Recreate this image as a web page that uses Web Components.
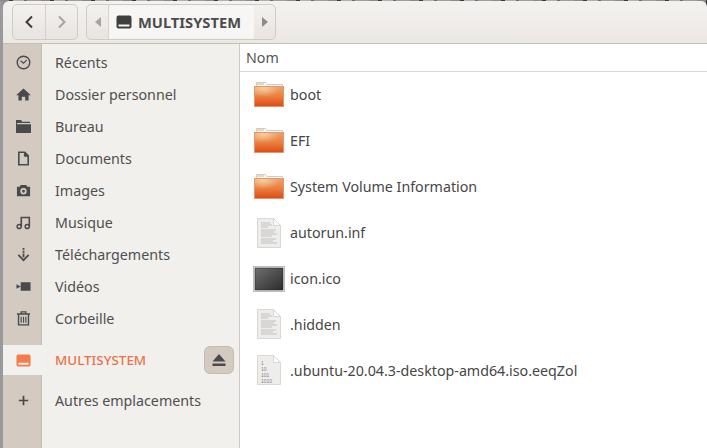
<!DOCTYPE html>
<html>
<head>
<meta charset="utf-8">
<style>
    html, body { margin: 0; height: 100%; overflow: hidden; }
    body {
        font-family: "Noto Sans", sans-serif; font-size: 14.25px; color: #4c4c4c;
        background:
            linear-gradient(90deg, #9a9a9c 3px, transparent 3px) 0 1px / 100% 100% no-repeat,
            repeating-linear-gradient(90deg, #8d8a86 0 9px, #3d3b3a 9px 13px, #b4afa8 13px 24px, #5f6f80 24px 27px, #a39d94 27px 41px);
    }
</style>
</head>
<body>

<template id="icons">
    <svg id="recent" viewBox="0 0 16 16"><circle cx="8" cy="8" r="6.7" fill="none" stroke="#4a4a4a" stroke-width="1.5"/><path d="M4.8 6.2L8 8.8l3.4-3.4" fill="none" stroke="#4a4a4a" stroke-width="1.3"/></svg>
    <svg id="home" viewBox="0 0 16 16"><path fill-rule="evenodd" d="M8 1.5L.2 8.8h2.4V14.5h3.6V10.5h3.6V14.5h3.6V8.8h2.4z" fill="#4a4a4a"/></svg>
    <svg id="desk" viewBox="0 0 16 16"><path d="M0 1h5.5l1 1.8H15v1.4H1.2V5.5H16V15H0z" fill="#4a4a4a"/></svg>
    <svg id="doc" viewBox="0 0 16 16"><path d="M3 1.4h6.4L13 5.2v9.4H3z" fill="none" stroke="#4a4a4a" stroke-width="1.7"/><path d="M9 1.4V5.6h4z" fill="#4a4a4a" stroke="#4a4a4a"/></svg>
    <svg id="cam" viewBox="0 0 16 16"><path fill-rule="evenodd" d="M1 4h3l1-2h6l1 2h3v10H1zM8 5.4a3.4 3.4 0 100 6.8 3.4 3.4 0 000-6.8zM8 7.3a1.5 1.5 0 110 3 1.5 1.5 0 010-3z" fill="#4a4a4a"/></svg>
    <svg id="music" viewBox="0 0 16 16"><path d="M5.6 12V2.6h8.6v9.4" fill="none" stroke="#4a4a4a" stroke-width="1.7"/><circle cx="3.4" cy="12.3" r="2.2" fill="none" stroke="#4a4a4a" stroke-width="1.6"/><circle cx="12" cy="12.3" r="2.2" fill="none" stroke="#4a4a4a" stroke-width="1.6"/></svg>
    <svg id="down" viewBox="0 0 16 16"><path d="M7 1h2v2H7zM7 4h2v2H7zM7 7h2v4H7z" fill="#4a4a4a"/><path d="M2.5 8.5L8 14l5.5-5.5" fill="none" stroke="#4a4a4a" stroke-width="1.9"/></svg>
    <svg id="video" viewBox="0 0 16 16"><path d="M5 3.5h10.5v9H5zM0.5 5.5L5 8l-4.5 2.5z" fill="#4a4a4a"/></svg>
    <svg id="trash" viewBox="0 0 16 16"><path d="M1 3.2h14M5.5 3V1h5v2" fill="none" stroke="#4a4a4a" stroke-width="1.4"/><path d="M2.7 3.5v11.3h10.6V3.5" fill="none" stroke="#4a4a4a" stroke-width="1.5"/><path d="M5.5 6v6.5M8 6v6.5M10.5 6v6.5" stroke="#4a4a4a" stroke-width="1.2"/></svg>
    <svg id="drive" viewBox="0 0 16 16"><path fill-rule="evenodd" d="M2.5 1.5h11a2 2 0 012 2v9a2 2 0 01-2 2h-11a2 2 0 01-2-2v-9a2 2 0 012-2zM2.5 10.5v2h11v-2z" fill="currentColor"/></svg>
    <svg id="plus" viewBox="0 0 16 16"><path d="M3 8h10M8 3v10" stroke="#4a4a4a" stroke-width="1.8"/></svg>
</template>

<template id="side_row_tpl">
    <style>
        :host { display: grid; grid-template-columns: 39px 1fr; height: 32px; align-items: stretch; }
        .rail { background: #d3cbc2; border-right: 1px solid #c4bbb1; display: flex; align-items: center; justify-content: center; color: #4a4a4a; }
        .rail svg { width: 15px; height: 15px; display: block; margin-left: 2px; }
        .label { display: flex; align-items: center; padding-left: 13px; white-space: nowrap; color: #4f4f4f; }
        :host([active]) { height: 30px; }
        :host([active]) .rail { background: #f2f1f0; border-right-color: #f2f1f0; color: #f47b4a; }
        :host([active]) .label { color: #e8734a; font-size: 13.4px; font-weight: 500; }
    </style>
    <div class="rail"></div>
    <div class="label"><slot></slot></div>
</template>

<template id="file_row_tpl">
    <style>
        :host { display: flex; align-items: center; height: 45.9px; padding-left: 12px; }
        .ic { width: 34px; height: 34px; display: flex; align-items: center; justify-content: center; flex: none; }
        .name { padding-left: 4px; white-space: nowrap; color: #464646; }
    </style>
    <div class="ic"></div>
    <div class="name"><slot></slot></div>
</template>

<template id="toolbar_tpl">
    <style>
        :host { display: flex; align-items: flex-start; height: 43px; box-sizing: border-box; padding: 3px 0 0 9px; background: linear-gradient(#f4f2f0, #ebe8e4); border-bottom: 1px solid #c4bfb8; border-radius: 6px 6px 0 0; }
        .group { display: flex; height: 36px; border: 1px solid #d0cbc4; border-radius: 5px; overflow: hidden; background: linear-gradient(#f3f1ef, #e8e4e0); box-sizing: border-box; }
        .nav { margin-right: 8px; }
        .nav div { width: 32px; display: flex; align-items: center; justify-content: center; }
        .nav div + div { border-left: 1px solid #d5d0ca; }
        .path .arrow { width: 21px; display: flex; align-items: center; justify-content: center; }
        .crumb { display: flex; align-items: center; width: 146px; box-sizing: border-box; padding-left: 8px; gap: 6px; background: #f7f6f5; font-weight: 700; font-size: 14.7px; color: #4c4c4c; box-shadow: 1px 0 1px #d5d0ca inset; }
        .crumb svg { width: 16px; height: 16px; color: #3f3f3f; }
        svg { display: block; }
    </style>
    <div class="group nav">
        <div><svg width="10" height="14" viewBox="0 0 10 14"><path d="M8 1.5L2.5 7 8 12.5" fill="none" stroke="#3c3c3c" stroke-width="2"/></svg></div>
        <div style="width:31px"><svg width="10" height="14" viewBox="0 0 10 14"><path d="M2 1.5L7.5 7 2 12.5" fill="none" stroke="#a8a5a1" stroke-width="2"/></svg></div>
    </div>
    <div class="group path">
        <div class="arrow"><svg width="6" height="10" viewBox="0 0 6 10"><path d="M6 0v10L0 5z" fill="#a8a5a1"/></svg></div>
        <div class="crumb"><svg viewBox="0 0 16 16"><path fill-rule="evenodd" d="M2.5 1.5h11a2 2 0 012 2v9a2 2 0 01-2 2h-11a2 2 0 01-2-2v-9a2 2 0 012-2zM2.5 10.5v2h11v-2z" fill="currentColor"/></svg><slot></slot></div>
        <div class="arrow"><svg width="6" height="10" viewBox="0 0 6 10"><path d="M0 0v10l6-5z" fill="#8f8c88"/></svg></div>
    </div>
</template>

<template id="window_tpl">
    <style>
        :host { display: grid; grid-template-rows: 43px 1fr; height: 447px; margin: 1px 0 0 3px; }
        .main { display: grid; grid-template-columns: 237px 1fr; min-height: 0; }
        .side { background: linear-gradient(90deg, #d3cbc2 38px, #c4bbb1 38px, #c4bbb1 39px, #f2f0ed 39px); border-right: 1px solid #cfcac3; padding-top: 2px; }
        .list { background: #fff; }
        .head { height: 28px; display: flex; align-items: center; padding-left: 6px; border-bottom: 1px solid #dcdad7; color: #555; box-sizing: border-box; }
        .sep { height: 11px; }
        .vol { position: relative; }
        .eject { position: absolute; right: 5px; top: 1px; width: 30px; height: 28px; box-sizing: border-box; border: 1px solid #c4bbb1; border-radius: 6px; background: #d3cbc2; display: flex; align-items: center; justify-content: center; }
    </style>
    <fm-toolbar>MULTISYSTEM</fm-toolbar>
    <div class="main">
        <div class="side">
            <slot name="places"></slot>
            <div class="sep"></div>
            <div class="vol">
                <slot name="volume"></slot>
                <div class="eject"><svg width="14" height="12" viewBox="0 0 14 12"><path d="M7 0l6.5 7.5H.5zM.5 9.5h13V12H.5z" fill="#4a4a4a"/></svg></div>
            </div>
            <div class="sep" style="height:9px"></div>
            <slot name="other"></slot>
        </div>
        <div class="list">
            <div class="head">Nom</div>
            <slot name="files"></slot>
        </div>
    </div>
</template>

<script>
    (function (customElements) {
        'use strict'

        const iconBank = document.querySelector('#icons').content;

        const folderSvg = `<svg width="30" height="25" viewBox="0 0 30 25">
            <defs>
                <linearGradient id="fg" x1="0" y1="0" x2="0" y2="1"><stop offset="0" stop-color="#efa06a"/><stop offset=".5" stop-color="#ea7f40"/><stop offset="1" stop-color="#de4a10"/></linearGradient>
                <radialGradient id="fh" cx=".3" cy=".1" r=".6"><stop offset="0" stop-color="#f6d3a4" stop-opacity=".9"/><stop offset="1" stop-color="#f6d3a4" stop-opacity="0"/></radialGradient>
            </defs>
            <path d="M2.5 .5h9l1.5 2h15.5v6h-26z" fill="#f8f7f5" stroke="#cfccc8"/>
            <path d="M3 2h7" stroke="#efb08a"/>
            <rect x=".5" y="4.5" width="29" height="20" fill="url(#fg)" stroke="#dd9a72"/>
            <rect x="1" y="5" width="28" height="14" fill="url(#fh)"/>
        </svg>`;

        function textSvg(lines) {
            let marks = '';
            lines.forEach(([y, x2]) => { marks += `<path d="M4 ${y}H${x2}" stroke="#bcbcb9" stroke-width=".9"/>`; });
            return `<svg width="24" height="30" viewBox="0 0 24 30">
                <path d="M.5.5h16l7 7v22H.5z" fill="#eeedeb" stroke="#d8d7d4"/>
                <path d="M16.5.5v7h7z" fill="#fbfbfb" stroke="#d8d7d4"/>
                ${marks}</svg>`;
        }
        const textIcon = textSvg([[5,13],[7,15],[9,11],[12,19],[14,17],[16,20],[18,15],[21,19],[23,16],[25,20]]);

        const binIcon = `<svg width="24" height="30" viewBox="0 0 24 30">
            <path d="M.5.5h16l7 7v22H.5z" fill="#eeedeb" stroke="#d8d7d4"/>
            <path d="M16.5.5v7h7z" fill="#fbfbfb" stroke="#d8d7d4"/>
            <g fill="#85857f" font-family="Liberation Sans" font-size="5"><text x="4" y="10">1</text><text x="4" y="16">10</text><text x="4" y="22">101</text><text x="4" y="28">1010</text></g></svg>`;

        const imageIcon = `<svg width="32" height="26" viewBox="0 0 32 26">
            <defs><linearGradient id="ig" x1="0" y1="0" x2="1" y2="1"><stop offset="0" stop-color="#707070"/><stop offset="1" stop-color="#2b2b2b"/></linearGradient></defs>
            <rect x=".5" y=".5" width="31" height="25" fill="#f2f2f2" stroke="#bdbdbd"/>
            <rect x="2" y="2" width="28" height="22" fill="url(#ig)" stroke="#222" stroke-width=".6"/></svg>`;

        class FmToolbar extends HTMLElement {
            constructor() {
                super();
                this.attachShadow({ mode: 'open' }).appendChild(document.querySelector('#toolbar_tpl').content.cloneNode(true));
            }
        }

        class FmWindow extends HTMLElement {
            constructor() {
                super();
                this.attachShadow({ mode: 'open' }).appendChild(document.querySelector('#window_tpl').content.cloneNode(true));
            }
        }

        class SideRow extends HTMLElement {
            constructor() {
                super();
                this.attachShadow({ mode: 'open' }).appendChild(document.querySelector('#side_row_tpl').content.cloneNode(true));
            }

            // los atributos todavia no existen en el constructor
            connectedCallback() {
                const icon = iconBank.querySelector('#' + this.getAttribute('icon'));
                this.shadowRoot.querySelector('.rail').replaceChildren(icon.cloneNode(true));
            }
        }

        class FileRow extends HTMLElement {
            constructor() {
                super();
                this.attachShadow({ mode: 'open' }).appendChild(document.querySelector('#file_row_tpl').content.cloneNode(true));
            }

            connectedCallback() {
                const kinds = { folder: folderSvg, text: textIcon, image: imageIcon, bin: binIcon };
                this.shadowRoot.querySelector('.ic').innerHTML = kinds[this.getAttribute('kind')];
            }
        }

        customElements.define('fm-toolbar', FmToolbar);
        customElements.define('fm-window', FmWindow);
        customElements.define('side-row', SideRow);
        customElements.define('file-row', FileRow);
    })(window.customElements);
</script>

<fm-window>
    <side-row slot="places" icon="recent">Récents</side-row>
    <side-row slot="places" icon="home">Dossier personnel</side-row>
    <side-row slot="places" icon="desk">Bureau</side-row>
    <side-row slot="places" icon="doc">Documents</side-row>
    <side-row slot="places" icon="cam">Images</side-row>
    <side-row slot="places" icon="music">Musique</side-row>
    <side-row slot="places" icon="down">Téléchargements</side-row>
    <side-row slot="places" icon="video">Vidéos</side-row>
    <side-row slot="places" icon="trash">Corbeille</side-row>
    <side-row slot="volume" icon="drive" active>MULTISYSTEM</side-row>
    <side-row slot="other" icon="plus">Autres emplacements</side-row>

    <file-row slot="files" kind="folder">boot</file-row>
    <file-row slot="files" kind="folder">EFI</file-row>
    <file-row slot="files" kind="folder">System Volume Information</file-row>
    <file-row slot="files" kind="text">autorun.inf</file-row>
    <file-row slot="files" kind="image">icon.ico</file-row>
    <file-row slot="files" kind="text">.hidden</file-row>
    <file-row slot="files" kind="bin">.ubuntu-20.04.3-desktop-amd64.iso.eeqZol</file-row>
</fm-window>

</body>
</html>
